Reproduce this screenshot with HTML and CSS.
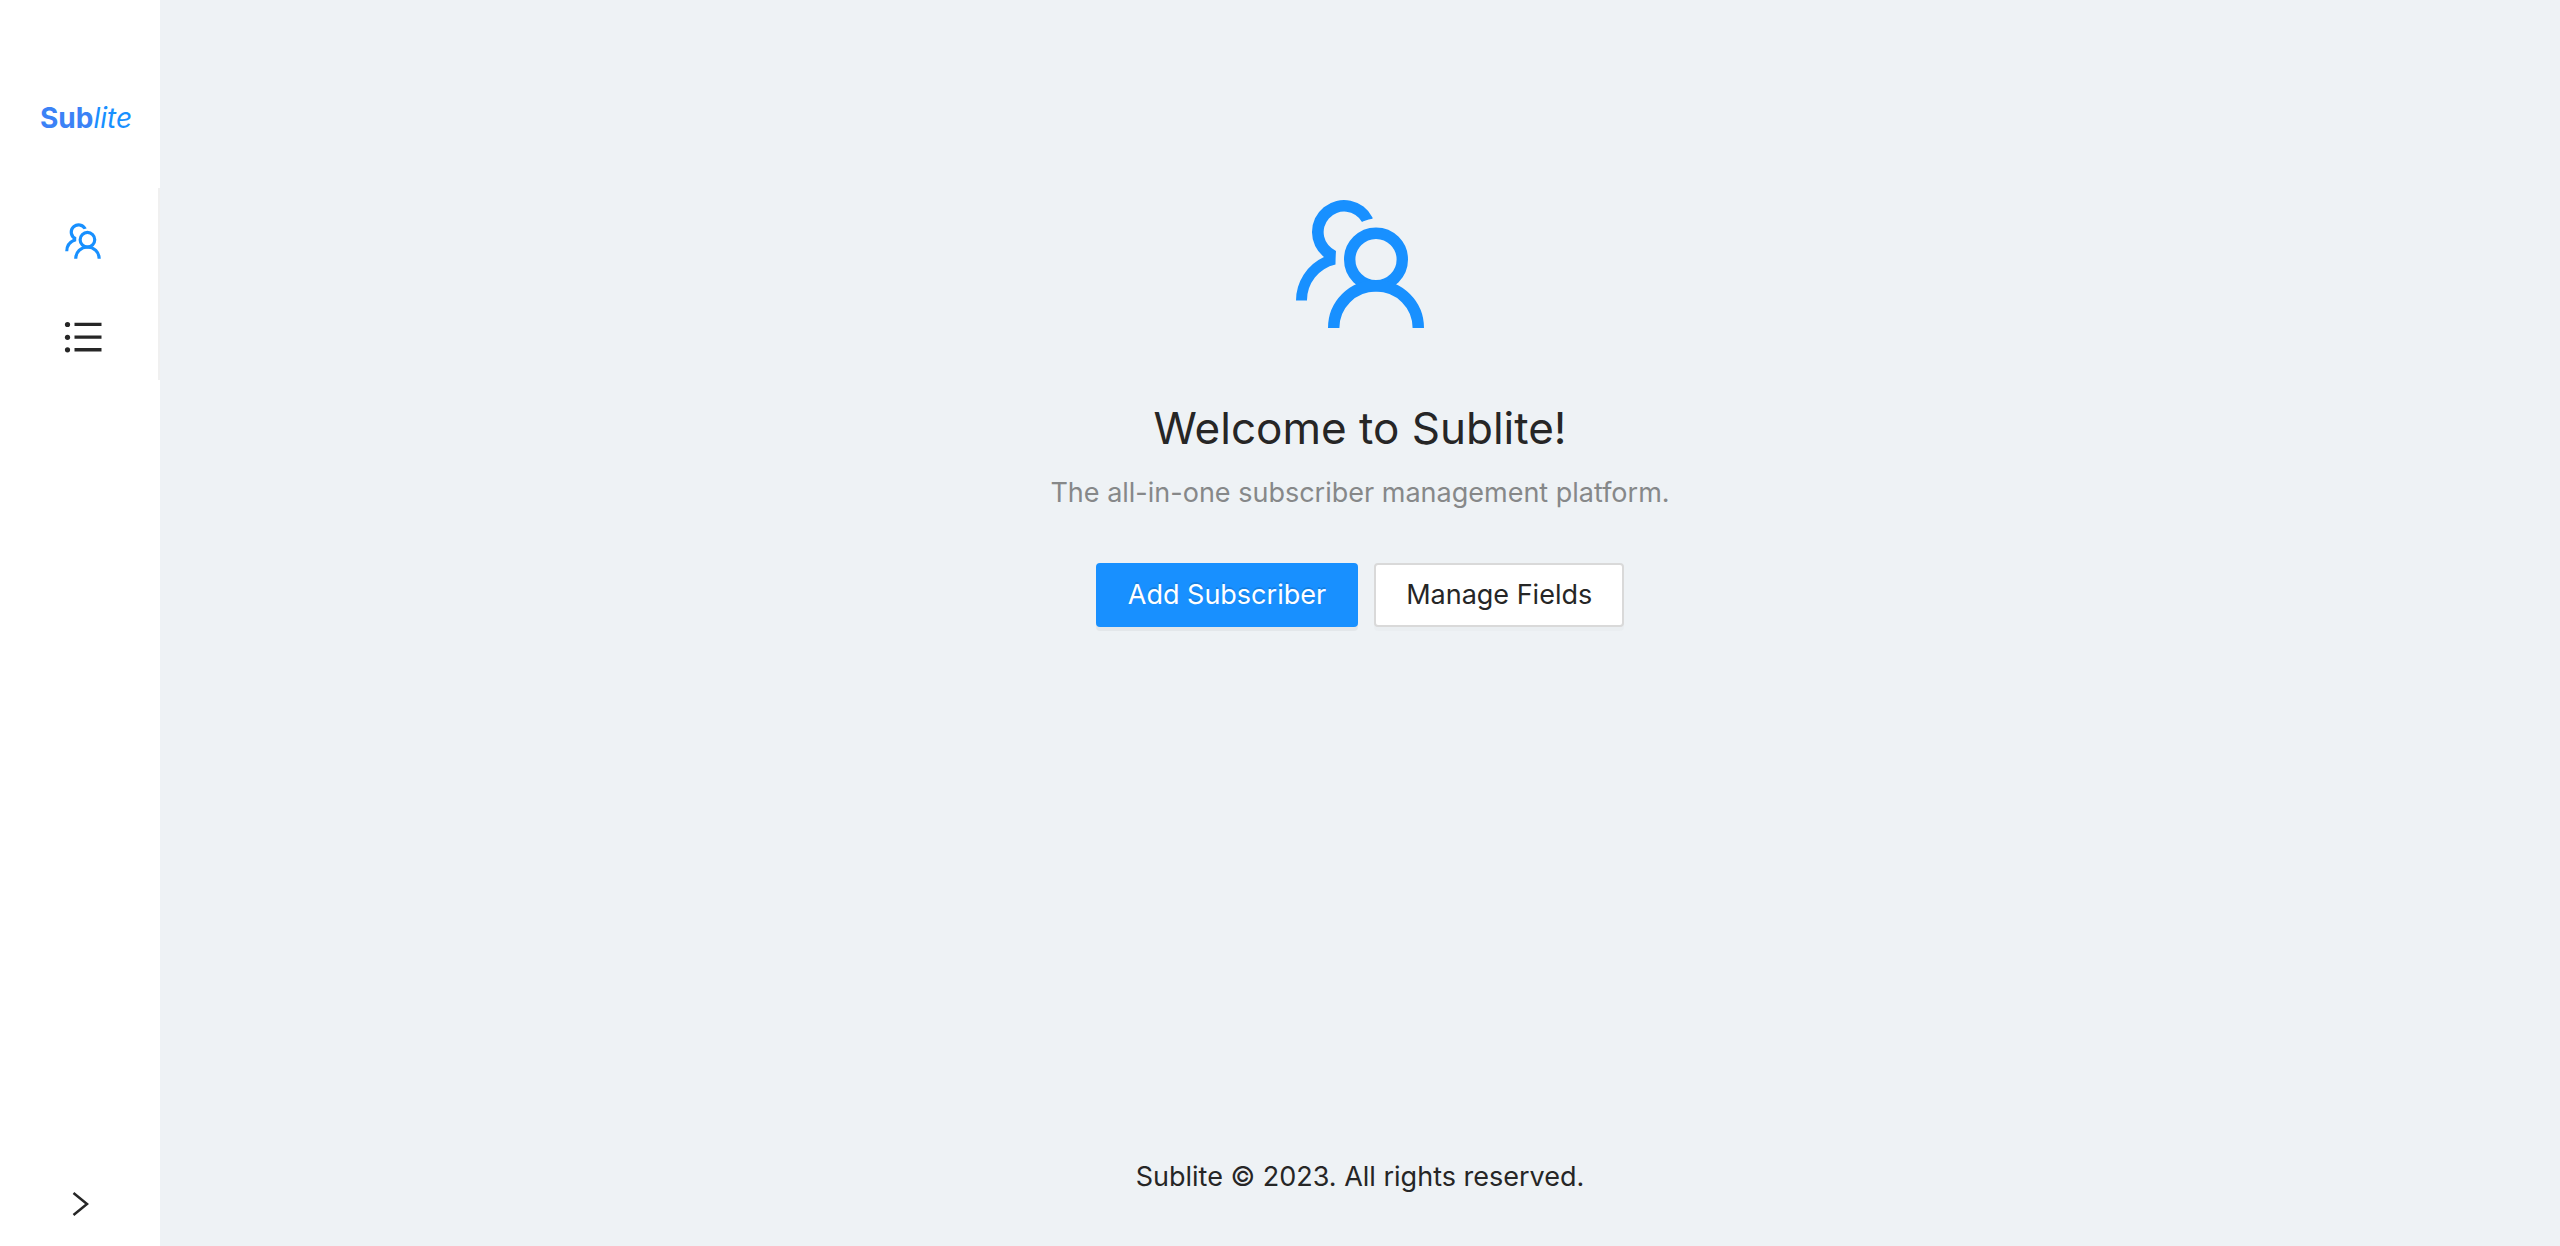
FILE: index.html
```html
<!DOCTYPE html>
<html lang="en">
<head>
<meta charset="utf-8">
<meta name="viewport" content="width=device-width, initial-scale=1">
<title>Sublite</title>
<link rel="stylesheet" href="styles.css">
</head>
<body>
<svg class="sprite" aria-hidden="true">
  <symbol id="users" viewBox="8 12 144 144">
    <path fill="currentColor" d="M92.500 37.500A32 32 0 1 0 44 77A48 48 0 0 0 16 120.500H27A36.500 36.500 0 0 1 55.500 84.500Q55.500 78 56 70.900A20.500 20.500 0 1 1 82 42Q84 40.500 92.500 38.800Z"/>
    <circle cx="96" cy="79.500" r="26.300" fill="none" stroke="currentColor" stroke-width="11.400"/>
    <path fill="none" stroke="currentColor" stroke-width="11.400" d="M53.700 148A42.300 42.300 0 0 1 138.300 148"/>
  </symbol>
</svg>
<div class="layout">
  <aside class="sider">
    <a class="logo" href="#"><b>Sub</b><i>lite</i></a>
    <nav class="menu">
      <a class="menu-item active" href="#" aria-label="Subscribers"><svg class="menu-icon"><use href="#users"/></svg></a>
      <a class="menu-item" href="#" aria-label="Fields">
        <svg class="menu-icon" viewBox="0 0 40 40" fill="currentColor">
          <circle cx="4.500" cy="7.500" r="2.600"/><circle cx="4.500" cy="20.300" r="2.600"/><circle cx="4.500" cy="32.800" r="2.600"/>
          <path d="M11.500 5.700h27v3.400h-27zM11.500 18.400h27v3.400h-27zM11.500 31h27v3.400h-27z"/>
        </svg>
      </a>
    </nav>
    <button class="trigger" type="button" aria-label="Expand sidebar">
      <svg class="trigger-icon" viewBox="0 0 28 28"><path d="M7.500 3L21 14L7.500 25" fill="none" stroke="currentColor" stroke-width="2.500"/></svg>
    </button>
  </aside>
  <div class="page">
    <main class="result">
      <svg class="result-icon"><use href="#users"/></svg>
      <h1 class="title">Welcome to Sublite!</h1>
      <p class="subtitle">The all-in-one subscriber management platform.</p>
      <div class="actions">
        <button class="btn primary" type="button">Add Subscriber</button>
        <button class="btn" type="button">Manage Fields</button>
      </div>
    </main>
    <footer class="footer">Sublite © 2023. All rights reserved.</footer>
  </div>
</div>
</body>
</html>
```
FILE: styles.css
```css
* { box-sizing: border-box; }
body {
  margin: 0;
  font-family: Inter, sans-serif;
  font-size: 27px;
  line-height: 44px;
  color: #262626;
  background: #eef2f5;
}
.sprite { display: none; }
.layout { display: flex; min-height: 100vh; }
.sider {
  flex: 0 0 160px;
  display: flex;
  flex-direction: column;
  background: #fff;
}
.logo {
  padding: 96px 0 48px 40px;
  color: #1890ff;
  font-size: 28px;
  text-decoration: none;
  white-space: nowrap;
}
.logo b { color: #3b82f6; }
.menu {
  padding-top: 5px;
  height: 192px;
  border-right: 2px solid #f0f0f0;
}
.menu-item {
  display: flex;
  align-items: center;
  height: 96px;
  padding-left: 63px;
  color: #262626;
}
.menu-item.active { color: #1890ff; }
.menu-icon { width: 40px; height: 40px; }
.trigger {
  display: flex;
  align-items: center;
  justify-content: center;
  height: 84px;
  margin-top: auto;
  padding: 0;
  border: 0;
  background: none;
  color: #262626;
}
.trigger-icon { width: 28px; height: 28px; }
.page { flex: 1; display: flex; flex-direction: column; }
.result {
  flex: 1;
  display: flex;
  flex-direction: column;
  align-items: center;
  padding: 192px 64px 96px;
  text-align: center;
}
.result-icon { width: 144px; height: 144px; color: #1890ff; margin-bottom: 49px; }
.title { margin: 0; font-size: 44px; font-weight: 400; line-height: 86px; }
.subtitle { margin: 0 0 48px; color: #868889; }
.actions { display: flex; gap: 16px; }
.btn {
  height: 64px;
  padding: 0 30px;
  border: 2px solid #d9d9d9;
  border-radius: 4px;
  background: #fff;
  box-shadow: 0 4px 0 rgba(0, 0, 0, .016);
  color: #262626;
  font: inherit;
}
.btn.primary {
  border-color: #1890ff;
  background: #1890ff;
  box-shadow: 0 4px 0 rgba(0, 0, 0, .043);
  color: #fff;
  text-shadow: 0 -2px 0 rgba(0, 0, 0, .12);
}
.footer { padding: 0 96px 47px; text-align: center; }
```
